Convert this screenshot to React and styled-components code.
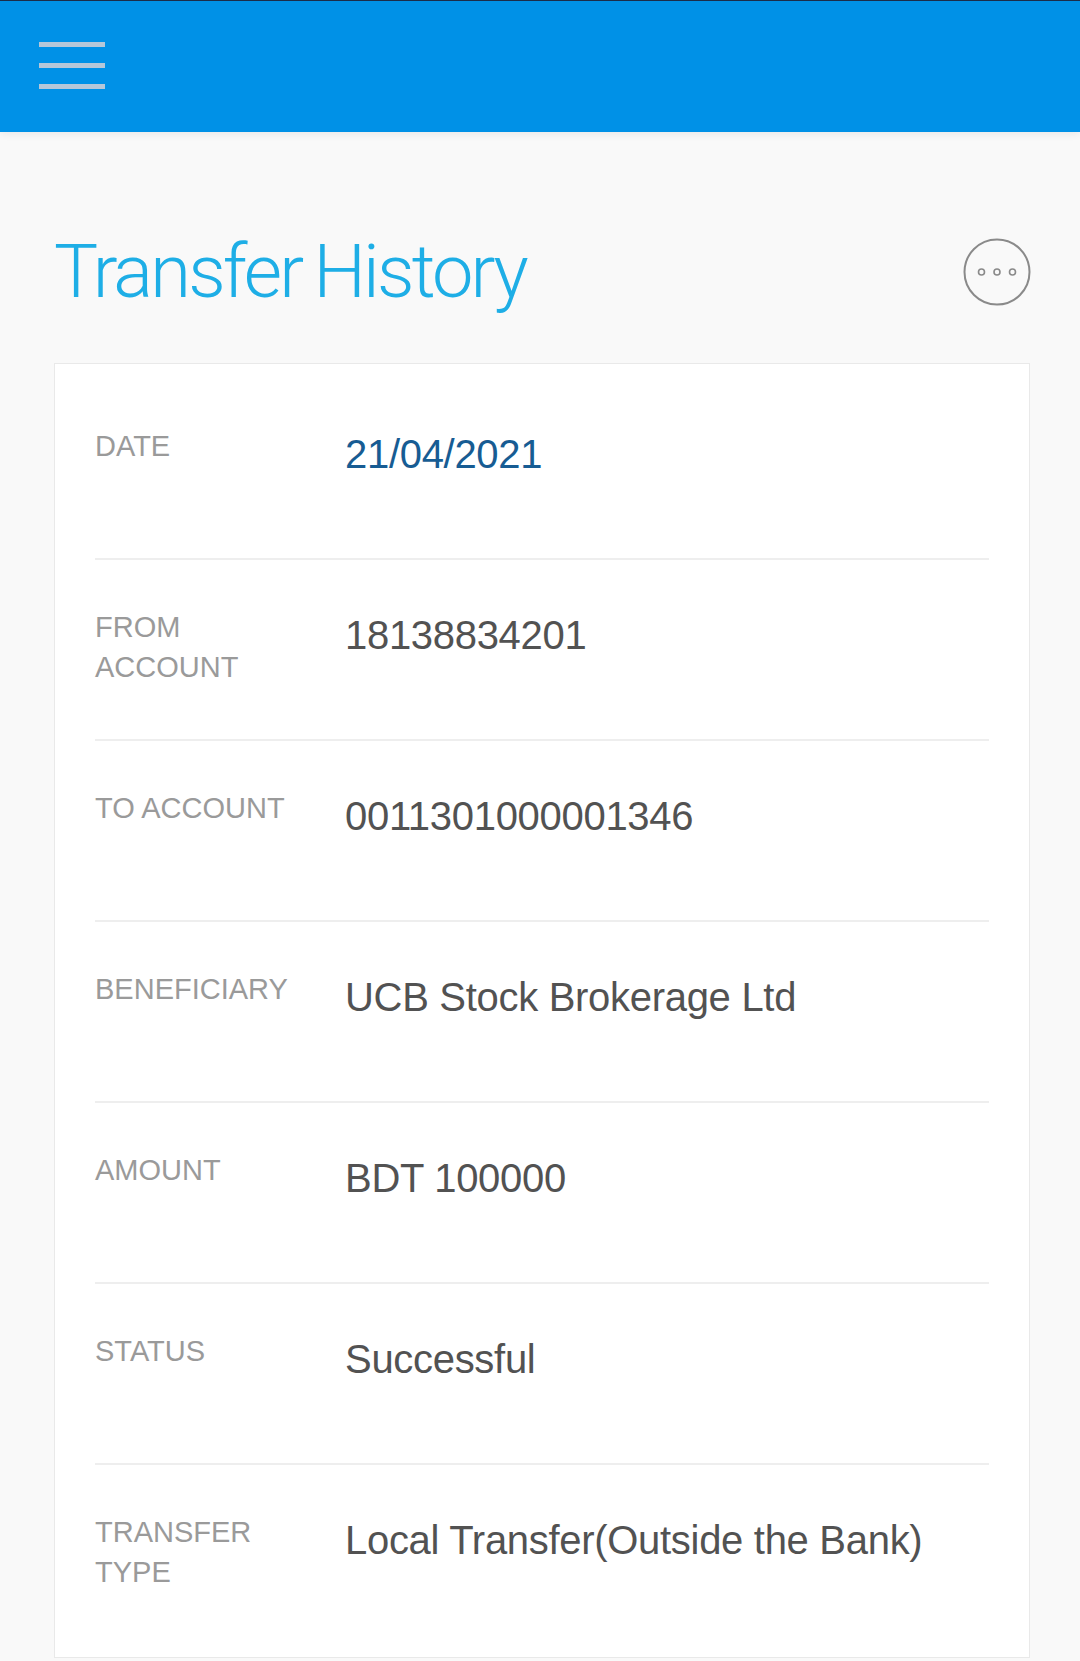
import React from "react";
import styled, { createGlobalStyle } from "styled-components";

const GlobalStyle = createGlobalStyle`
  html, body {
    margin: 0;
    padding: 0;
    background: #f9f9f9;
  }
  body {
    font-family: "Liberation Sans", Arial, sans-serif;
  }
  * {
    box-sizing: border-box;
  }
`;

const rows = [
  { label: "DATE", value: "21/04/2021", accent: true },
  { label: "FROM ACCOUNT", value: "18138834201" },
  { label: "TO ACCOUNT", value: "0011301000001346" },
  { label: "BENEFICIARY", value: "UCB Stock Brokerage Ltd" },
  { label: "AMOUNT", value: "BDT 100000" },
  { label: "STATUS", value: "Successful" },
  { label: "TRANSFER TYPE", value: "Local Transfer(Outside the Bank)" },
];

const App = () => {
  return (
    <Page>
      <GlobalStyle />
      <Header>
        <MenuButton aria-label="menu">
          <MenuLine />
          <MenuLine />
          <MenuLine />
        </MenuButton>
      </Header>
      <Content>
        <TitleRow>
          <Title>Transfer History</Title>
          <MoreButton aria-label="more">
            <svg width="68" height="68" viewBox="0 0 68 68">
              <circle cx="34" cy="34" r="32.5" fill="none" stroke="#8a8a8a" strokeWidth="2" />
              <circle cx="18.5" cy="34" r="3" fill="none" stroke="#8a8a8a" strokeWidth="1.6" />
              <circle cx="34" cy="34" r="3" fill="none" stroke="#8a8a8a" strokeWidth="1.6" />
              <circle cx="49.5" cy="34" r="3" fill="none" stroke="#8a8a8a" strokeWidth="1.6" />
            </svg>
          </MoreButton>
        </TitleRow>
        <Card>
          {rows.map((row, i) => (
            <Row key={row.label} first={i === 0}>
              <Label>{row.label}</Label>
              <Value accent={row.accent}>{row.value}</Value>
            </Row>
          ))}
        </Card>
      </Content>
    </Page>
  );
};
export default App;

const Page = styled.div`
  min-height: 1661px;
  background: #f9f9f9;
`;

const Header = styled.header`
  height: 132px;
  background: #0091e7;
  border-top: 1px solid #1b2c4a;
  padding: 41px 0 0 39px;
  box-shadow: 0 2px 8px rgba(0, 0, 0, 0.07);
`;

const MenuButton = styled.div`
  display: flex;
  flex-direction: column;
  gap: 16px;
  width: 66px;
`;

const MenuLine = styled.span`
  display: block;
  height: 5px;
  width: 66px;
  background: #b6c7d9;
`;

const Content = styled.div`
  padding: 0 50px 0 54px;
`;

const TitleRow = styled.div`
  display: flex;
  justify-content: space-between;
  align-items: center;
  padding: 96px 0 47px 0;
`;

const Title = styled.h1`
  margin: 0;
  font-family: "Roboto", "Liberation Sans", sans-serif;
  font-weight: 300;
  font-size: 74px;
  line-height: 88px;
  letter-spacing: -2.8px;
  word-spacing: -3px;
  color: #1eaee6;
`;

const MoreButton = styled.div`
  width: 68px;
  height: 68px;
  margin-right: -1px;
  display: flex;
  svg {
    display: block;
  }
`;

const Card = styled.div`
  background: #ffffff;
  border: 1px solid #e9e9e9;
  padding: 13px 40px;
`;

const Row = styled.div`
  display: grid;
  grid-template-columns: 210px 1fr;
  column-gap: 40px;
  align-items: start;
  height: 181px;
  padding-top: 47px;
  border-top: 2px solid ${(p) => (p.first ? "transparent" : "#eeeeee")};
`;

const Label = styled.div`
  font-size: 29px;
  line-height: 40px;
  color: #9a9a9a;
`;

const Value = styled.div`
  margin-top: 4px;
  font-size: 40px;
  line-height: 48px;
  letter-spacing: -0.3px;
  color: ${(p) => (p.accent ? "#175c93" : "#525252")};
`;
